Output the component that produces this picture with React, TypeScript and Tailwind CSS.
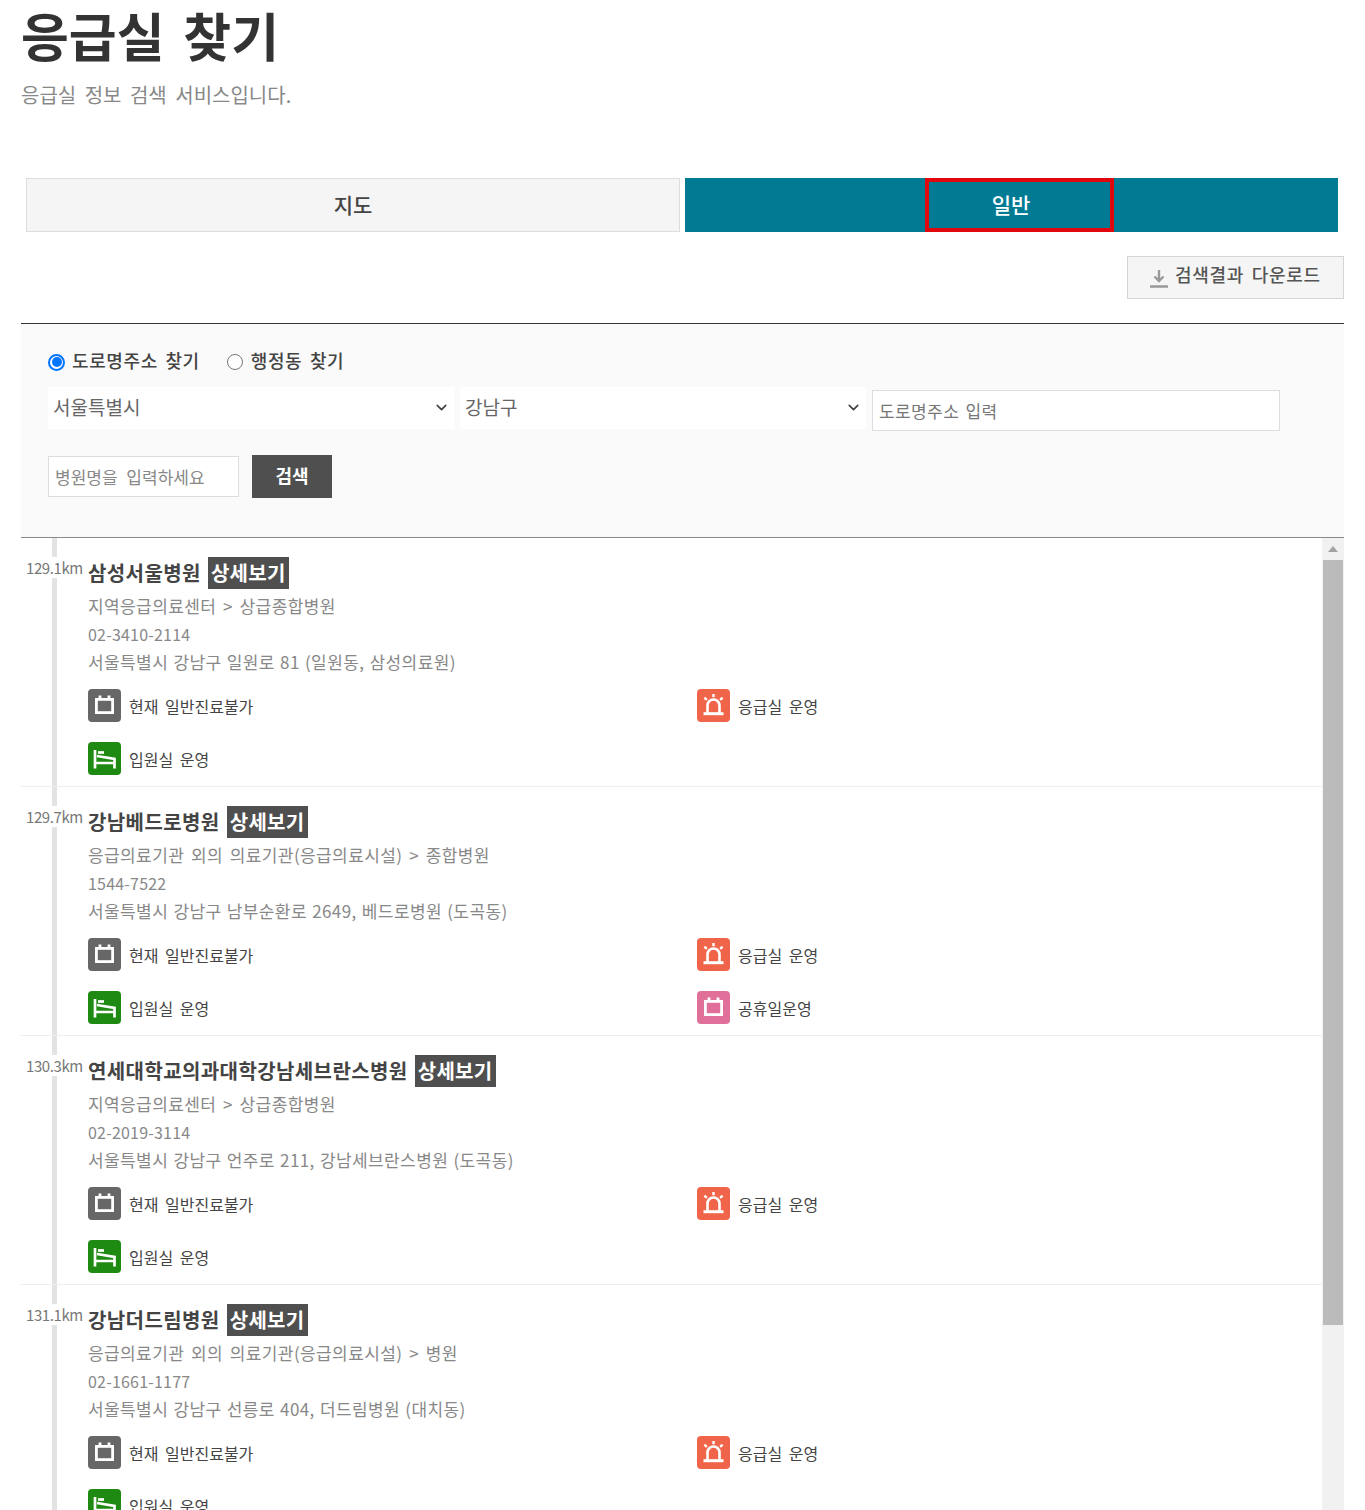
import { ChevronDown } from 'lucide-react';

type Hospital = {
  distance: string;
  name: string;
  category: string;
  phone: string;
  address: string;
  holiday?: boolean;
};

const HOSPITALS: Hospital[] = [
  {
    distance: '129.1km',
    name: '삼성서울병원',
    category: '지역응급의료센터 > 상급종합병원',
    phone: '02-3410-2114',
    address: '서울특별시 강남구 일원로 81 (일원동, 삼성의료원)',
  },
  {
    distance: '129.7km',
    name: '강남베드로병원',
    category: '응급의료기관 외의 의료기관(응급의료시설) > 종합병원',
    phone: '1544-7522',
    address: '서울특별시 강남구 남부순환로 2649, 베드로병원 (도곡동)',
    holiday: true,
  },
  {
    distance: '130.3km',
    name: '연세대학교의과대학강남세브란스병원',
    category: '지역응급의료센터 > 상급종합병원',
    phone: '02-2019-3114',
    address: '서울특별시 강남구 언주로 211, 강남세브란스병원 (도곡동)',
  },
  {
    distance: '131.1km',
    name: '강남더드림병원',
    category: '응급의료기관 외의 의료기관(응급의료시설) > 병원',
    phone: '02-1661-1177',
    address: '서울특별시 강남구 선릉로 404, 더드림병원 (대치동)',
  },
];

function CalendarIcon() {
  return (
    <svg width="23" height="23" viewBox="0 0 23 23" fill="none" stroke="white" strokeWidth="2.8">
      <rect x="3.4" y="5.4" width="16.2" height="13.2" />
      <path d="M7 1.5v4M16 1.5v4" />
    </svg>
  );
}

function SirenIcon() {
  return (
    <svg width="25" height="25" viewBox="0 0 25 25" fill="none" stroke="white" strokeWidth="2.6">
      <path d="M6.5 20v-7.5a6 6 0 0 1 12 0V20" />
      <path d="M2.5 20.7h20" strokeWidth="3" />
      <path d="M12.5 1v3.2M3.4 4.6l2.4 2.2M21.6 4.6l-2.4 2.2" strokeWidth="2.4" />
    </svg>
  );
}

function BedIcon() {
  return (
    <svg width="25" height="25" viewBox="0 0 25 25" fill="none" stroke="white" strokeWidth="2.7">
      <path d="M3 4v18.5M3 17h19.5v5.5M22.5 17v-4L5 10" />
      <path d="M6 6.5h6" />
    </svg>
  );
}

function Status({ color, label, icon }: { color: string; label: string; icon: React.ReactNode }) {
  return (
    <div className="flex h-[33px] items-center gap-[8px]">
      <span className={`flex h-[33px] w-[33px] items-center justify-center rounded-[4px] ${color}`}>{icon}</span>
      <span className="text-[16px] text-[#444] [word-spacing:3px]">{label}</span>
    </div>
  );
}

function HospitalItem({ item }: { item: Hospital }) {
  return (
    <div className="flex h-[249px] border-b border-[#eeeeee]">
      <div className="relative w-[67px] shrink-0">
        <div className="absolute bottom-0 left-[31px] top-0 w-[5px] bg-[#e3e3e3]" />
        <div className="relative ml-[5px] mt-[19px] w-[58px] bg-white text-[15px] leading-[21px] tracking-[-0.4px] text-[#777]">
          {item.distance}
        </div>
      </div>
      <div className="min-w-0 flex-1 pt-[19px]">
        <div className="flex h-[32px] items-center gap-[7px]">
          <span className="text-[20px] font-bold tracking-[0.4px] text-[#444]">{item.name}</span>
          <span className="flex h-[32px] w-[81px] items-center justify-center bg-[#4f4f4f] text-[20px] font-bold tracking-[0.3px] text-white">
            상세보기
          </span>
        </div>
        <p className="mt-[2px] h-[30px] text-[17px] leading-[30px] tracking-[0.4px] text-[#888] [word-spacing:2.5px]">
          {item.category}
        </p>
        <p className="h-[27px] text-[16px] leading-[27px] tracking-[0.2px] text-[#888]">{item.phone}</p>
        <p className="h-[27px] text-[17px] leading-[27px] tracking-[0.4px] text-[#888] [word-spacing:1px]">
          {item.address}
        </p>
        <div className="mt-[14px] grid grid-cols-[609px_1fr] gap-y-[20px]">
          <Status color="bg-[#676767]" label="현재 일반진료불가" icon={<CalendarIcon />} />
          <Status color="bg-[#f0654a]" label="응급실 운영" icon={<SirenIcon />} />
          <Status color="bg-[#1f8a12]" label="입원실 운영" icon={<BedIcon />} />
          {item.holiday && <Status color="bg-[#e0709a]" label="공휴일운영" icon={<CalendarIcon />} />}
        </div>
      </div>
    </div>
  );
}

export default function App() {
  return (
    <div
      className="h-[1510px] w-[1365px] overflow-hidden bg-white"
      style={{ fontFamily: '"Noto Sans CJK KR", "Noto Sans", sans-serif' }}
    >
      <div className="pl-[21px] pr-[21px]">
        <h1 className="h-[74px] text-[52px] font-bold leading-[70px] text-[#333] [word-spacing:7px]">응급실 찾기</h1>
        <p className="mt-[7px] h-[28px] text-[20px] leading-[28px] text-[#888] [word-spacing:4px]">
          응급실 정보 검색 서비스입니다.
        </p>

        <div className="ml-[5px] mr-[6px] mt-[69px] flex h-[54px] gap-[5px]">
          <div className="flex w-[654px] items-center justify-center border border-[#dddddd] bg-[#f5f5f5] text-[21px] font-medium text-[#444]">
            지도
          </div>
          <div className="flex flex-1 items-center justify-center bg-[#017b94]">
            <span className="ml-[16px] flex h-[54px] w-[189px] items-center justify-center border-[4px] border-[#e0080c] pr-[17px] text-[21px] font-medium text-white">
              일반
            </span>
          </div>
        </div>

        <div className="mt-[24px] flex justify-end">
          <div className="flex h-[43px] w-[217px] items-center gap-[6px] border border-[#d5d5d5] bg-[#f5f5f5] pb-[7px] pl-[21px] text-[18px] font-medium tracking-[0.7px] text-[#555] [word-spacing:3px]">
            <svg width="20" height="20" viewBox="0 0 20 20" fill="none" stroke="#999" strokeWidth="2.4" className="mt-[8px]">
              <path d="M10 2v11M5.5 8.5 10 13l4.5-4.5M1 18.5h18" />
            </svg>
            검색결과 다운로드
          </div>
        </div>

        <div className="mt-[24px] h-[215px] border-b border-t border-b-[#8a8a8a] border-t-[#333] bg-[#fafafa] pl-[27px] pt-[23px]">
          <div className="flex h-[26px] items-center text-[18px] font-medium tracking-[0.6px] text-[#444] [word-spacing:3px]">
            <span className="mt-[4px] flex h-[17px] w-[17px] items-center justify-center rounded-full border-2 border-[#0075ff] bg-white">
              <span className="h-[10px] w-[10px] rounded-full bg-[#0075ff]" />
            </span>
            <span className="ml-[7px]">도로명주소 찾기</span>
            <span className="ml-[27px] mt-[4px] h-[16px] w-[16px] rounded-full border border-[#767676] bg-white" />
            <span className="ml-[8px]">행정동 찾기</span>
          </div>
          <div className="mt-[14px] flex items-start gap-[6px]">
            <div className="flex h-[42px] w-[406px] items-center justify-between bg-white pb-[2px] pl-[5px] pr-[4px] text-[19px] text-[#666]">
              서울특별시
              <ChevronDown size={17} strokeWidth={2.4} color="#444" />
            </div>
            <div className="flex h-[42px] w-[406px] items-center justify-between bg-white pb-[2px] pl-[5px] pr-[4px] text-[19px] text-[#666]">
              강남구
              <ChevronDown size={17} strokeWidth={2.4} color="#444" />
            </div>
            <div className="mt-[3px] flex h-[41px] w-[408px] items-center border border-[#dddddd] bg-white pl-[6px] text-[17px] tracking-[0.4px] text-[#777] [word-spacing:2px]">
              도로명주소 입력
            </div>
          </div>
          <div className="mt-[25px] flex items-start gap-[13px]">
            <div className="flex h-[41px] w-[191px] items-center border border-[#dddddd] bg-white pl-[6px] text-[17px] text-[#888] [word-spacing:5px]">
              병원명을 입력하세요
            </div>
            <div className="mt-[-1px] flex h-[43px] w-[80px] items-center justify-center bg-[#4f4f4f] pb-[3px] text-[18px] font-bold text-white">
              검색
            </div>
          </div>
        </div>

        <div className="flex h-[972px] overflow-hidden">
          <div className="min-w-0 flex-1">
            {HOSPITALS.map(h => (
              <HospitalItem key={h.distance} item={h} />
            ))}
          </div>
          <div className="w-[22px] shrink-0 bg-[#f1f1f1] px-[1px]">
            <div className="flex h-[22px] items-center justify-center">
              <span className="h-0 w-0 border-x-[5px] border-b-[6px] border-x-transparent border-b-[#a3a3a3]" />
            </div>
            <div className="h-[765px] bg-[#bbbbbb]" />
          </div>
        </div>
      </div>
    </div>
  );
}
